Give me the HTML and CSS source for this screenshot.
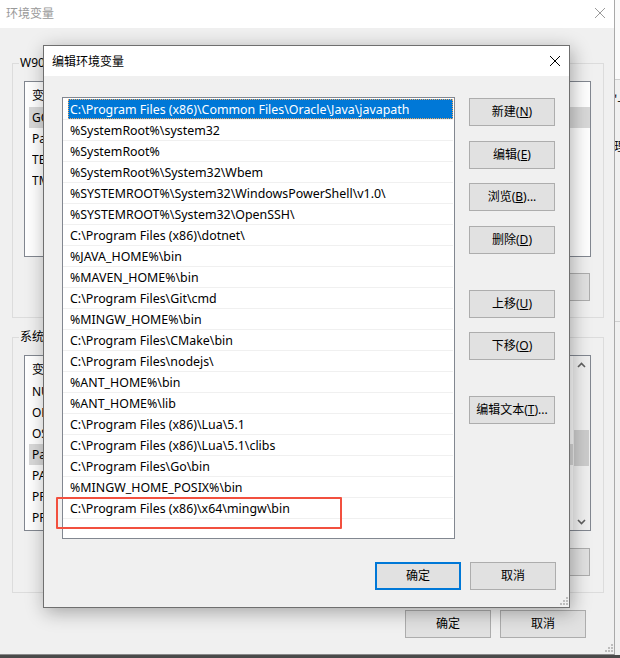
FILE: index.html
```html
<!DOCTYPE html>
<html lang="zh-CN">
<head>
<meta charset="utf-8">
<title>编辑环境变量</title>
<link rel="stylesheet" href="styles.css">
</head>
<body>
<div class="desktop">
  <div class="bgwin">
    <div class="titlebar inactive">
      <span class="title">环境变量</span>
      <svg class="xicon" width="10" height="10" viewBox="0 0 10 10"><path d="M0 0L10 10M10 0L0 10" stroke="#9a9a9a" stroke-width="1"/></svg>
    </div>
    <div class="bgbody">
      <fieldset class="group">
        <legend>W9030 的用户变量(<u>U</u>)</legend>
        <div class="listview">
          <div class="lv-main">
            <div class="lv-head"><span class="c1">变量</span><span class="c2">值</span></div>
            <div class="lv-row grey"><span class="c1">GOPATH</span><span class="c2">C:\Users\W9030\go</span></div>
            <div class="lv-row"><span class="c1">Path</span><span class="c2">C:\Users\W9030\AppData\Local\Microsoft\WindowsApps;</span></div>
            <div class="lv-row"><span class="c1">TEMP</span><span class="c2">C:\Users\W9030\AppData\Local\Temp</span></div>
            <div class="lv-row"><span class="c1">TMP</span><span class="c2">C:\Users\W9030\AppData\Local\Temp</span></div>
          </div>
        </div>
        <div class="btnrow">
          <button class="btn">新建(<u>N</u>)...</button>
          <button class="btn">编辑(<u>E</u>)...</button>
          <button class="btn">删除(<u>D</u>)</button>
        </div>
      </fieldset>
      <fieldset class="group group2">
        <legend>系统变量(<u>S</u>)</legend>
        <div class="listview">
          <div class="lv-main">
            <div class="lv-head"><span class="c1">变量</span><span class="c2">值</span></div>
            <div class="lv-row"><span class="c1">NUMBER_OF_PROCESSORS</span><span class="c2">8</span></div>
            <div class="lv-row"><span class="c1">OPENSSL_CONF</span><span class="c2">C:\OpenSSL\bin\openssl.cfg</span></div>
            <div class="lv-row"><span class="c1">OS</span><span class="c2">Windows_NT</span></div>
            <div class="lv-row grey"><span class="c1">Path</span><span class="c2">C:\Program Files (x86)\Common Files\Oracle\Java\javapath;</span></div>
            <div class="lv-row"><span class="c1">PATHEXT</span><span class="c2">.COM;.EXE;.BAT;.CMD;.VBS;.VBE;.JS;.JSE;.WSF;.WSH;.MSC</span></div>
            <div class="lv-row"><span class="c1">PROCESSOR_ARCHITECTURE</span><span class="c2">AMD64</span></div>
            <div class="lv-row"><span class="c1">PROCESSOR_IDENTIFIER</span><span class="c2">Intel64 Family 6</span></div>
          </div>
          <div class="vscroll">
            <div class="sb-btn"><svg width="9" height="6" viewBox="0 0 9 6"><path d="M1 5L4.5 1.5L8 5" fill="none" stroke="#606060" stroke-width="1.6"/></svg></div>
            <div class="sb-track"><div class="sb-thumb"></div></div>
            <div class="sb-btn"><svg width="9" height="6" viewBox="0 0 9 6"><path d="M1 1L4.5 4.5L8 1" fill="none" stroke="#606060" stroke-width="1.6"/></svg></div>
          </div>
        </div>
        <div class="btnrow">
          <button class="btn">新建(<u>W</u>)...</button>
          <button class="btn">编辑(<u>I</u>)...</button>
          <button class="btn">删除(<u>L</u>)</button>
        </div>
      </fieldset>
      <div class="footer bgfooter">
        <button class="btn">确定</button>
        <button class="btn">取消</button>
      </div>
    </div>
    <svg class="grip" width="8" height="8" viewBox="0 0 8 8"><g fill="#bdbdbd"><rect x="6" y="0" width="2" height="2"/><rect x="3" y="3" width="2" height="2"/><rect x="6" y="3" width="2" height="2"/><rect x="0" y="6" width="2" height="2"/><rect x="3" y="6" width="2" height="2"/><rect x="6" y="6" width="2" height="2"/></g></svg>
  </div>
  <div class="behind">
    <div class="behind-top"></div>
    <div class="behind-mid"><span class="frag">'-</span><span class="frag">理</span></div>
    <div class="behind-low"></div>
  </div>

  <div class="dialog">
    <div class="titlebar">
      <span class="title">编辑环境变量</span>
      <svg class="xicon" width="10" height="10" viewBox="0 0 10 10"><path d="M0 0L10 10M10 0L0 10" stroke="#000" stroke-width="1"/></svg>
    </div>
    <div class="dlgbody">
      <div class="pathlist">
        <div class="prow selected"><span class="pcell">C:\Program Files (x86)\Common Files\Oracle\Java\javapath</span></div>
        <div class="prow"><span class="pcell">%SystemRoot%\system32</span></div>
        <div class="prow"><span class="pcell">%SystemRoot%</span></div>
        <div class="prow"><span class="pcell">%SystemRoot%\System32\Wbem</span></div>
        <div class="prow"><span class="pcell">%SYSTEMROOT%\System32\WindowsPowerShell\v1.0\</span></div>
        <div class="prow"><span class="pcell">%SYSTEMROOT%\System32\OpenSSH\</span></div>
        <div class="prow"><span class="pcell">C:\Program Files (x86)\dotnet\</span></div>
        <div class="prow"><span class="pcell">%JAVA_HOME%\bin</span></div>
        <div class="prow"><span class="pcell">%MAVEN_HOME%\bin</span></div>
        <div class="prow"><span class="pcell">C:\Program Files\Git\cmd</span></div>
        <div class="prow"><span class="pcell">%MINGW_HOME%\bin</span></div>
        <div class="prow"><span class="pcell">C:\Program Files\CMake\bin</span></div>
        <div class="prow"><span class="pcell">C:\Program Files\nodejs\</span></div>
        <div class="prow"><span class="pcell">%ANT_HOME%\bin</span></div>
        <div class="prow"><span class="pcell">%ANT_HOME%\lib</span></div>
        <div class="prow"><span class="pcell">C:\Program Files (x86)\Lua\5.1</span></div>
        <div class="prow"><span class="pcell">C:\Program Files (x86)\Lua\5.1\clibs</span></div>
        <div class="prow"><span class="pcell">C:\Program Files\Go\bin</span></div>
        <div class="prow"><span class="pcell">%MINGW_HOME_POSIX%\bin</span></div>
        <div class="prow"><span class="pcell">C:\Program Files (x86)\x64\mingw\bin</span></div>
      </div>
      <div class="btncol">
        <button class="btn b-new">新建(<u>N</u>)</button>
        <button class="btn b-edit">编辑(<u>E</u>)</button>
        <button class="btn b-browse">浏览(<u>B</u>)...</button>
        <button class="btn b-del">删除(<u>D</u>)</button>
        <button class="btn b-up">上移(<u>U</u>)</button>
        <button class="btn b-down">下移(<u>O</u>)</button>
        <button class="btn b-text">编辑文本(<u>T</u>)...</button>
      </div>
    </div>
    <div class="footer dlgfooter">
      <button class="btn default">确定</button>
      <button class="btn">取消</button>
    </div>
    <svg class="grip" width="8" height="8" viewBox="0 0 8 8"><g fill="#bdbdbd"><rect x="6" y="0" width="2" height="2"/><rect x="3" y="3" width="2" height="2"/><rect x="6" y="3" width="2" height="2"/><rect x="0" y="6" width="2" height="2"/><rect x="3" y="6" width="2" height="2"/><rect x="6" y="6" width="2" height="2"/></g></svg>
  </div>

  <div class="mark"></div>
</div>
</body>
</html>
```

FILE: styles.css
```css
* { box-sizing: border-box; }
html, body { margin: 0; padding: 0; }
body {
  width: 620px;
  height: 658px;
  overflow: hidden;
  font-family: "Noto Sans", "Noto Sans CJK SC", sans-serif;
  font-size: 12px;
  color: #000;
  background: #4a4a4a;
}
.desktop {
  position: relative;
  width: 620px;
  height: 658px;
  display: flex;
  align-items: flex-start;
  background: #4a4a4a;
}

/* ---------- background window ---------- */
.bgwin {
  position: relative;
  width: 615px;
  height: 655px;
  flex: none;
  background: #f0f0f0;
  border-right: 1px solid #a9a9a9;
  border-bottom: 1px solid #8a8a8a;
  display: flex;
  flex-direction: column;
}
.titlebar {
  flex: none;
  display: flex;
  align-items: center;
  justify-content: space-between;
  background: #fff;
  white-space: nowrap;
}
.bgwin .titlebar {
  height: 28px;
  padding: 0 9px 3px 6px;
}
.titlebar .title {
  font-family: "Noto Sans CJK SC", sans-serif;
  font-size: 12px;
  line-height: 16px;
}
.titlebar.inactive .title { color: #999; }
.xicon { display: block; flex: none; }

.bgbody {
  flex: 1;
  display: flex;
  flex-direction: column;
  padding: 0 10px 0 12px;
}
.group {
  margin: 27px 0 0 0;
  padding: 0 12px 16px 11px;
  border: 1px solid #dcdcdc;
  min-width: 0;
  display: flex;
  flex-direction: column;
}
.group2 { margin-top: 11px; }
.group legend {
  margin-left: -5px;
  padding: 0 1px;
  font-family: "Noto Sans", "Noto Sans CJK SC", sans-serif;
  font-size: 12px;
  line-height: 16px;
  white-space: nowrap;
}
.listview {
  margin-top: 10px;
  height: 176px;
  background: #fff;
  border: 1px solid #828790;
  display: flex;
  overflow: hidden;
}
.lv-main { flex: 1; min-width: 0; overflow: hidden; }
.lv-head {
  height: 25px;
  display: flex;
  align-items: center;
  padding-left: 7px;
  font-family: "Noto Sans CJK SC", sans-serif;
  white-space: nowrap;
}
.lv-row {
  height: 21px;
  margin-left: 4px;
  padding-left: 3px;
  display: flex;
  align-items: center;
  white-space: nowrap;
}
.lv-row.grey { background: #d9d9d9; }
.c1 { width: 170px; flex: none; overflow: hidden; }
.c2 { flex: 1; }

.vscroll {
  width: 17px;
  flex: none;
  display: flex;
  flex-direction: column;
  background: #f0f0f0;
}
.sb-btn {
  height: 17px;
  display: flex;
  align-items: center;
  justify-content: center;
}
.sb-track {
  flex: 1;
  padding-top: 57px;
  display: flex;
  justify-content: center;
}
.sb-thumb {
  width: 15px;
  height: 36px;
  background: #cdcdcd;
}

.btn {
  width: 86px;
  height: 28px;
  margin: 0;
  padding: 0;
  background: #e1e1e1;
  border: 1px solid #adadad;
  font-family: "Noto Sans", "Noto Sans CJK SC", sans-serif;
  font-size: 12px;
  line-height: 16px;
  color: #000;
  text-align: center;
  white-space: nowrap;
}
.btn u { text-underline-offset: 1px; }
.btnrow {
  margin-top: 16px;
  display: flex;
  justify-content: flex-end;
  gap: 9px;
  margin-right: 1px;
}
.group2 .btnrow { margin-top: 17px; }

.footer {
  display: flex;
  justify-content: flex-end;
  gap: 9px;
}
.bgfooter {
  margin-top: 17px;
  margin-right: 18px;
}
.grip {
  position: absolute;
  right: 1px;
  bottom: 2px;
}

/* ---------- window behind (right strip) ---------- */
.behind {
  flex: 1;
  height: 655px;
  display: flex;
  flex-direction: column;
  background: #f0f0f0;
  overflow: hidden;
}
.behind-top {
  height: 80px;
  background: #fafafa;
  border-bottom: 1px solid #cfcfcf;
}
.behind-mid {
  height: 242px;
  border-bottom: 1px solid #cfcfcf;
  display: flex;
  flex-direction: column;
  font-family: "Noto Sans CJK SC", sans-serif;
  font-size: 12px;
  line-height: 16px;
  overflow: hidden;
  padding-top: 12px;
  gap: 30px;
}
.frag { margin-left: -1px; white-space: nowrap; }
.behind-low { flex: 1; }

/* ---------- dialog ---------- */
.dialog {
  position: absolute;
  left: 43px;
  top: 45px;
  width: 527px;
  height: 563px;
  background: #f0f0f0;
  border: 1px solid #6f6f6f;
  box-shadow: 2px 4px 18px rgba(0, 0, 0, 0.32);
  display: flex;
  flex-direction: column;
}
.dialog .titlebar {
  height: 30px;
  padding: 0 9px 0 8px;
}
.dlgbody {
  display: flex;
  padding: 21px 13px 0 18px;
}
.pathlist {
  width: 393px;
  height: 442px;
  flex: none;
  background: #fff;
  border: 1px solid #828790;
  padding: 1px 1px 0 0;
  overflow: hidden;
}
.prow {
  height: 21px;
  border-bottom: 1px solid #f0f0f0;
  display: flex;
}
.pcell {
  flex: 1;
  margin-left: 5px;
  padding-left: 2px;
  height: 20px;
  line-height: 22px;
  white-space: nowrap;
  font-family: "Noto Sans", sans-serif;
  font-size: 12.4px;
}
.prow.selected .pcell {
  background: #0078d7;
  color: #fff;
  outline: 1px dotted #f0a860;
  outline-offset: -1px;
}
.btncol {
  margin-left: 14px;
  width: 86px;
  display: flex;
  flex-direction: column;
}
.b-new { margin-top: 1px; }
.b-edit { margin-top: 15px; }
.b-browse { margin-top: 14px; }
.b-del { margin-top: 15px; }
.b-up { margin-top: 36px; }
.b-down { margin-top: 14px; }
.b-text { margin-top: 36px; }

.dlgfooter {
  margin-top: 23px;
  padding-right: 13px;
}
.btn.default { border: 2px solid #0078d7; }

/* annotation */
.mark {
  position: absolute;
  left: 56px;
  top: 497px;
  width: 286px;
  height: 32px;
  border: 2px solid #f2503f;
  border-radius: 1px;
}
```
